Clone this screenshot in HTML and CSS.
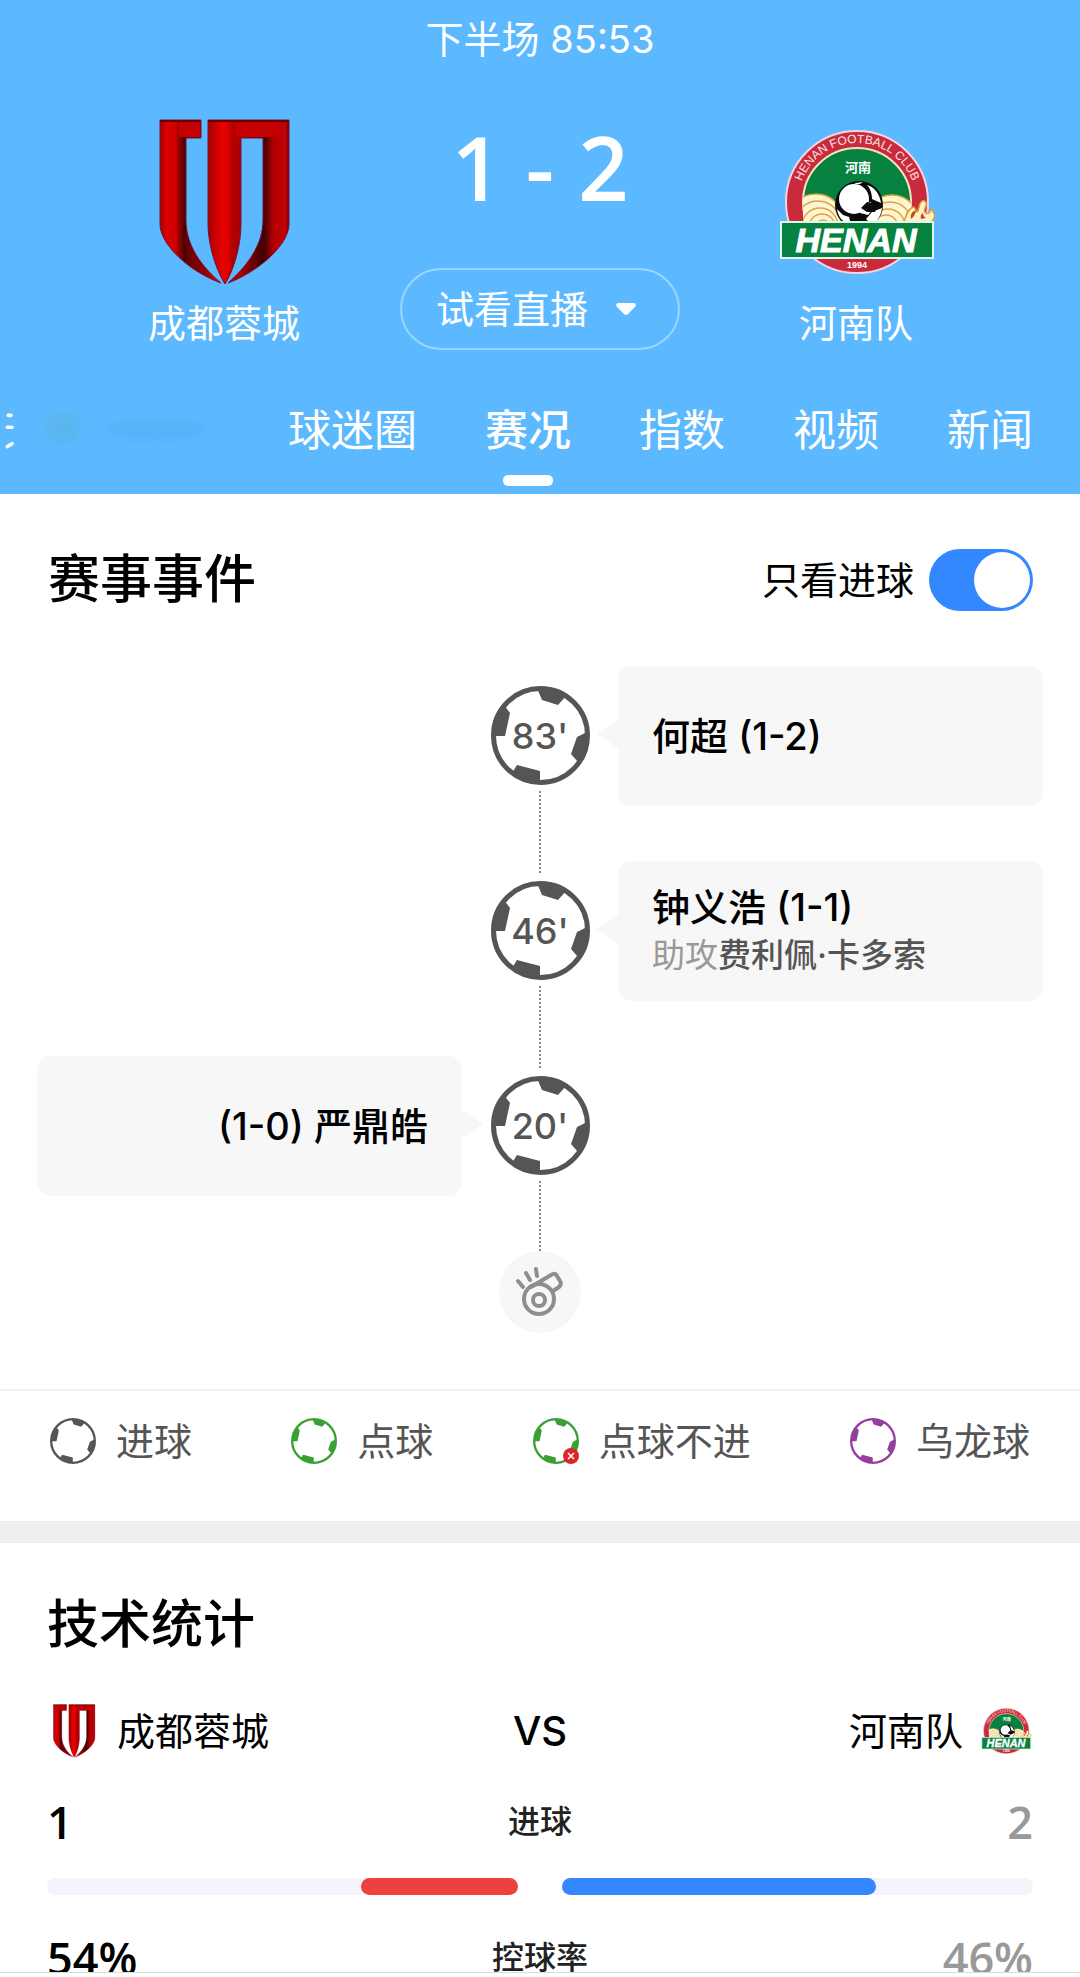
FILE: index.html
```html
<!DOCTYPE html>
<html lang="zh-CN">
<head>
<meta charset="utf-8">
<meta name="viewport" content="width=device-width, initial-scale=1">
<title>成都蓉城 1-2 河南队</title>
<link rel="stylesheet" href="styles.css">
</head>
<body>
<svg class="defs" aria-hidden="true">
  <defs>
    <linearGradient id="red-metal" gradientUnits="userSpaceOnUse" x1="0" y1="0" x2="129" y2="0">
      <stop offset="0" stop-color="#a00008"/>
      <stop offset=".05" stop-color="#dc0000"/>
      <stop offset=".12" stop-color="#cc0000"/>
      <stop offset=".19" stop-color="#480004"/>
      <stop offset=".22" stop-color="#680004"/>
      <stop offset=".34" stop-color="#8a0008"/>
      <stop offset=".4" stop-color="#b80000"/>
      <stop offset=".49" stop-color="#ea0000"/>
      <stop offset=".52" stop-color="#e00000"/>
      <stop offset=".56" stop-color="#b40000"/>
      <stop offset=".63" stop-color="#a80004"/>
      <stop offset=".8" stop-color="#3c0004"/>
      <stop offset=".88" stop-color="#b00000"/>
      <stop offset=".97" stop-color="#c40004"/>
      <stop offset="1" stop-color="#70000c"/>
    </linearGradient>
    <clipPath id="henan-inner"><path d="M23 93V73a54 54 0 0 1 108 0v20z"/></clipPath>
    <path id="henan-arc" d="M18 73a59 59 0 0 1 118 0"/>
    <filter id="soft" x="-20%" y="-50%" width="140%" height="200%"><feGaussianBlur stdDeviation="5"/></filter>
  </defs>

  <symbol id="crest-chengdu" viewBox="-20 -2 168 168">
    <path fill="url(#red-metal)" stroke="#7c1030" d="M0 0H41V18H26V100C26 126 42 147 61 163C30 152 0 125 0 104Z"/>
    <path fill="url(#red-metal)" stroke="#7c1030" d="M48 0H129V104C129 125 98 152 68 163C86 147 103 126 103 100V18H81V104C81 125 74 150 65 164C56 150 48 125 48 104Z"/>
    <path fill="#c40000" d="M19 2H40V17H19zM76 2H119V17H76z"/>
    <path fill="none" stroke="#6a0008" stroke-width="2" d="M0 1H41M48 1H129"/>
  </symbol>

  <symbol id="ball" viewBox="0 0 99 99">
    <circle cx="49.500" cy="49.500" r="47" fill="#fff" stroke="currentColor" stroke-width="5"/>
    <path fill="currentColor" d="M46 2L51 14L67 19L76 9Q62 1 46 2ZM13 19L19 27L14 50H2Q2 32 13 19ZM21 87L26 79L49 85V97Q32 96 21 87ZM96 46L86 51L80 68L87 76Q98 63 96 46Z"/>
  </symbol>

  <symbol id="whistle" viewBox="0 0 82 82">
    <g fill="none" stroke="#8e8e8e" stroke-width="4" stroke-linecap="round" stroke-linejoin="round">
      <circle cx="40" cy="48" r="15"/><circle cx="40" cy="49" r="6"/>
      <path d="M32 36L52 24Q56 21 58 25L61 30Q63 33 60 36L54 40M19 30L24 36M27 22L31 29M37 18L38 25"/>
    </g>
  </symbol>
</svg>

<div class="app">
  <div class="scroll">
    <header class="match">
      <p class="clock">下半场 85:53</p>
      <div class="board">
        <div class="team">
          <svg class="crest" aria-hidden="true"><use href="#crest-chengdu"/></svg>
          <span class="team-name">成都蓉城</span>
        </div>
        <div class="center">
          <div class="score"><span>1</span><span>-</span><span>2</span></div>
          <button class="live" type="button">试看直播
            <svg class="caret" viewBox="0 0 20 12" aria-hidden="true"><path fill="#fff" d="M2 0H18Q21 1 19 4L12 11Q10 13 8 11L1 4Q-1 1 2 0Z"/></svg>
          </button>
        </div>
        <div class="team">
          <svg class="crest" viewBox="-8 -11 168 168" aria-hidden="true">
            <g id="crest-henan">
              <circle cx="77" cy="73" r="71" fill="#c92b3c" stroke="#f6d5e2" stroke-width="2"/>
              <circle cx="77" cy="73" r="54" fill="#07813f" stroke="#f3e3c0" stroke-width="2"/>
              <text class="crest-ring" font-size="12"><textPath href="#henan-arc" startOffset="50%" text-anchor="middle">HENAN FOOTBALL CLUB</textPath></text>
              <text class="crest-cjk" x="78" y="43" font-size="13" text-anchor="middle">河南</text>
              <g clip-path="url(#henan-inner)" fill="#fff4d4" stroke="#dda53c" stroke-width="1.500">
                <circle cx="36" cy="93" r="28"/><circle cx="38" cy="95" r="23"/><circle cx="40" cy="97" r="18"/><circle cx="42" cy="98" r="13"/><circle cx="43" cy="99" r="8"/>
                <circle cx="112" cy="93" r="27"/><circle cx="110" cy="95" r="22"/><circle cx="108" cy="97" r="17"/><circle cx="106" cy="98" r="12"/>
              </g>
              <path fill="#fff0c8" stroke="#e09a2c" stroke-width="1.500" d="M124 93C126 86 128 80 133 78C136 78 135 82 137 83C140 80 138 75 142 72C146 71 148 75 145 79C143 84 147 86 150 83C149 80 151 79 154 84C156 88 153 93 149 93Z"/>
              <path fill="#b5521b" d="M131 90c-1-5 2-9 5-8-1 3-2 6-5 8zM141 90c-1-3 0-5 2-6 0 2 1 4 3 5z"/>
              <circle cx="79" cy="76" r="24" fill="#0b0b0d"/>
              <circle cx="74" cy="70" r="15" fill="#fff"/>
              <path fill="#fff" d="M87 56C95 58 100 66 101 74L92 70C92 64 90 59 87 56ZM92 83L102 79C101 87 97 93 92 96L86 90ZM57 80L63 86L69 88L71 95C63 94 58 88 57 80ZM76 54L83 53L80 55L74 55ZM84 75L91 73L93 80L88 86L80 84Z"/>
              <path fill="#0b0b0d" d="M87 73L97 75L95 83L87 83L81 79Z"/>
              <rect x="1" y="93" width="152" height="36" fill="#07813f" stroke="#e2f5ea" stroke-width="2"/>
              <text class="crest-word" x="76" y="123" font-size="34" text-anchor="middle">HENAN</text>
              <text class="crest-year" x="77" y="139" font-size="9" text-anchor="middle">1994</text>
            </g>
          </svg>
          <span class="team-name">河南队</span>
        </div>
      </div>
      <nav class="tabs">
        <svg class="tab-fade" viewBox="0 0 240 60" aria-hidden="true">
          <g filter="url(#soft)" opacity=".35">
            <ellipse cx="68" cy="28" rx="20" ry="18" fill="#58b0cc"/>
            <ellipse cx="170" cy="30" rx="56" ry="11" fill="#4fa6ea"/>
          </g>
          <path fill="none" stroke="#fff" stroke-width="4" stroke-linecap="round" d="M9 14H12M8 27H13M8 48L13 45"/>
        </svg>
        <a href="#fans">球迷圈</a>
        <a href="#events" class="active" aria-current="page">赛况</a>
        <a href="#odds">指数</a>
        <a href="#video">视频</a>
        <a href="#news">新闻</a>
      </nav>
    </header>

    <main>
      <section class="events" id="events">
        <div class="section-head">
          <h2>赛事事件</h2>
          <label class="only-goals">只看进球 <input class="switch" type="checkbox" role="switch" checked></label>
        </div>
        <ol class="timeline">
          <li class="event away">
            <div class="marker"><div class="ball"><svg aria-hidden="true"><use href="#ball"/></svg><time>83'</time></div><i class="line"></i></div>
            <div class="card"><p class="scorer">何超 (1-2)</p></div>
          </li>
          <li class="event away">
            <div class="marker"><div class="ball"><svg aria-hidden="true"><use href="#ball"/></svg><time>46'</time></div><i class="line"></i></div>
            <div class="card"><p class="scorer">钟义浩 (1-1)</p><p class="assist">助攻<b>费利佩·卡多索</b></p></div>
          </li>
          <li class="event home">
            <div class="marker"><div class="ball"><svg aria-hidden="true"><use href="#ball"/></svg><time>20'</time></div><i class="line"></i></div>
            <div class="card"><p class="scorer">(1-0) 严鼎皓</p></div>
          </li>
          <li class="kickoff"><svg aria-hidden="true"><use href="#whistle"/></svg></li>
        </ol>
        <ul class="legend">
          <li><svg class="goal" aria-hidden="true"><use href="#ball"/></svg>进球</li>
          <li><svg class="penalty" aria-hidden="true"><use href="#ball"/></svg>点球</li>
          <li><svg class="penalty" viewBox="0 0 46 46" aria-hidden="true"><use href="#ball" width="46" height="46"/><circle cx="38" cy="38" r="8" fill="#d9272e"/><path stroke="#fff" stroke-width="1.500" d="M35 35L41 41M41 35L35 41"/></svg>点球不进</li>
          <li><svg class="own" aria-hidden="true"><use href="#ball"/></svg>乌龙球</li>
        </ul>
      </section>

      <section class="stats">
        <h2>技术统计</h2>
        <div class="versus">
          <div class="side"><svg aria-hidden="true"><use href="#crest-chengdu"/></svg>成都蓉城</div>
          <span class="vs">VS</span>
          <div class="side right">河南队<svg viewBox="-8 -11 168 168" aria-hidden="true"><use href="#crest-henan"/></svg></div>
        </div>
        <div class="stat">
          <div class="values"><span class="value">1</span><span class="label">进球</span><span class="value lower">2</span></div>
          <div class="bars">
            <div class="bar"><div class="fill red" style="width:33.33%"></div></div>
            <div class="bar"><div class="fill blue" style="width:66.67%"></div></div>
          </div>
        </div>
        <div class="stat">
          <div class="values"><span class="value">54%</span><span class="label">控球率</span><span class="value lower">46%</span></div>
          <div class="bars">
            <div class="bar"><div class="fill red" style="width:54%"></div></div>
            <div class="bar"><div class="fill blue" style="width:46%"></div></div>
          </div>
        </div>
      </section>
    </main>
  </div>
  <footer class="bottom"></footer>
</div>
</body>
</html>
```
FILE: styles.css
```css
* { box-sizing: border-box; }

body, h2, p, ol, ul { margin: 0; padding: 0; }
ol, ul { list-style: none; }

body {
  font-family: Inter, "Noto Sans CJK SC", sans-serif;
  font-size: 38px;
  line-height: 50px;
  color: #000;
  background: #fff;
}

.defs { position: absolute; width: 0; height: 0; }

.app { display: flex; flex-direction: column; height: 100vh; }
.scroll { flex: 1; min-height: 0; overflow: hidden auto; scrollbar-width: none; }
.bottom { height: 5px; border-top: 1px solid #dcdcdc; background: #fff; }

/* Match header */
.match { background: #5cb9ff; color: #fff; padding-top: 14px; }
.clock { text-align: center; }
.board {
  display: grid;
  grid-template-columns: 1fr 280px 1fr;
  padding: 0 48px;
  margin-top: 54px;
}
.team { display: flex; flex-direction: column; align-items: center; gap: 12px; padding-bottom: 2px; }
.crest { width: 168px; height: 168px; }
.center { display: flex; flex-direction: column; justify-content: space-between; }
.score {
  display: flex;
  justify-content: center;
  gap: 24px;
  font-family: "Open Sans", sans-serif;
  font-size: 88px;
  line-height: 98px;
  font-weight: 600;
}
.live {
  display: flex;
  align-items: center;
  justify-content: center;
  gap: 28px;
  height: 82px;
  padding: 0 8px 0 0;
  border: 2px solid #9ad7ff;
  border-radius: 41px;
  background: none;
  color: #fff;
  font: inherit;
}
.caret { width: 20px; height: 12px; }

.tabs {
  display: flex;
  justify-content: flex-end;
  gap: 68px;
  margin-top: 50px;
  padding-right: 47px;
  font-size: 43px;
  line-height: 60px;
}
.tabs a {
  display: flex;
  flex-direction: column;
  align-items: center;
  height: 94px;
  color: #fff;
  text-decoration: none;
  white-space: nowrap;
}
.tabs .active { font-weight: 500; }
.tabs .active::after {
  content: "";
  width: 50px;
  height: 11px;
  margin-top: 15px;
  border-radius: 5px;
  background: #fff;
}
.tab-fade { width: 240px; height: 60px; margin-right: auto; }

.crest-ring { font-family: "Liberation Sans", sans-serif; fill: #fbe3e3; }
.crest-cjk { font-family: "Noto Sans CJK SC", sans-serif; font-weight: 700; fill: #fff; }
.crest-word { font-family: "Liberation Sans", sans-serif; font-weight: 700; font-style: italic; fill: #fff; stroke: #fff; }
.crest-year { font-family: "Liberation Sans", sans-serif; font-weight: 700; fill: #fff; }

/* Events */
h2 { font-size: 52px; line-height: 84px; font-weight: 500; }
.section-head {
  display: flex;
  align-items: center;
  justify-content: space-between;
  height: 126px;
  padding: 46px 47px 0 48px;
}
.only-goals { display: flex; align-items: center; gap: 15px; }
.switch {
  appearance: none;
  display: flex;
  align-items: center;
  width: 104px;
  height: 62px;
  margin: 0;
  padding: 3px;
  border-radius: 31px;
  background: #c8c8cc;
}
.switch::before { content: ""; width: 56px; height: 56px; border-radius: 50%; background: #fff; }
.switch:checked { justify-content: flex-end; background: #3388ff; }

.timeline { padding: 46px 37px 56px; }
.event {
  display: grid;
  grid-template-columns: 1fr 98px 1fr;
  column-gap: 29px;
  align-items: start;
  height: 195px;
}
.marker { grid-area: 1 / 2; display: flex; flex-direction: column; align-items: center; height: 100%; padding-top: 20px; }
.ball { display: grid; place-items: center; color: #555; }
.ball svg, .ball time { grid-area: 1 / 1; }
.ball svg { width: 99px; height: 99px; }
.ball time { font-size: 36px; font-weight: 500; }
.line {
  flex: 1;
  width: 2px;
  margin: 6px 0 -12px;
  background: repeating-linear-gradient(#888 0 2px, transparent 2px 4px);
}
.event.home .line { margin-bottom: 0; }
.card {
  position: relative;
  grid-row: 1;
  display: flex;
  flex-direction: column;
  justify-content: center;
  height: 140px;
  padding: 0 34px;
  border-radius: 14px;
  background: #f7f7f7;
  line-height: 48px;
}
.away .card { grid-column: 3; }
.home .card { grid-column: 1; text-align: right; }
.card::before {
  content: "";
  position: absolute;
  top: 54px;
  width: 21px;
  height: 28px;
  background: #f7f7f7;
}
.away .card::before { right: 100%; clip-path: polygon(100% 0, 100% 100%, 0 50%); }
.home .card::before { left: 100%; clip-path: polygon(0 0, 0 100%, 100% 50%); }
.scorer { font-weight: 500; }
.assist { font-size: 33px; color: #999; }
.assist b { font-weight: 500; color: #555; }
.kickoff { display: flex; justify-content: center; }
.kickoff svg { width: 82px; height: 82px; border-radius: 50%; background: #f7f7f7; }

.legend {
  display: flex;
  justify-content: space-between;
  padding: 25px 50px 55px;
  border-top: 2px solid #f1f1f1;
  border-bottom: 22px solid #efefef;
  color: #555;
}
.legend li { display: flex; align-items: center; gap: 20px; }
.legend svg { width: 46px; height: 46px; }
.goal { color: #555; }
.penalty { color: #3aa035; }
.own { color: #943e9e; }

/* Statistics */
.stats { padding: 40px 47px; }
.versus, .values { display: grid; grid-template-columns: 1fr auto 1fr; align-items: center; }
.versus { height: 56px; margin-top: 36px; }
.side { display: flex; align-items: center; gap: 16px; }
.side svg { width: 54px; height: 56px; }
.side.right { justify-content: flex-end; }
.vs { font-size: 40px; font-weight: 500; }
.stat { margin-top: 38px; }
.value { font-family: "Open Sans", sans-serif; font-size: 45px; font-weight: 600; }
.value.lower { color: #999; text-align: right; }
.label { font-size: 32px; color: #222; font-weight: 500; }
.bars { display: grid; grid-template-columns: 1fr 1fr; gap: 44px; margin-top: 31px; }
.bar { display: flex; height: 17px; border-radius: 9px; background: #f4f5fa; }
.bar:first-child { justify-content: flex-end; }
.fill { border-radius: 9px; }
.red { background: #ef4040; }
.blue { background: #3388ff; }
```
